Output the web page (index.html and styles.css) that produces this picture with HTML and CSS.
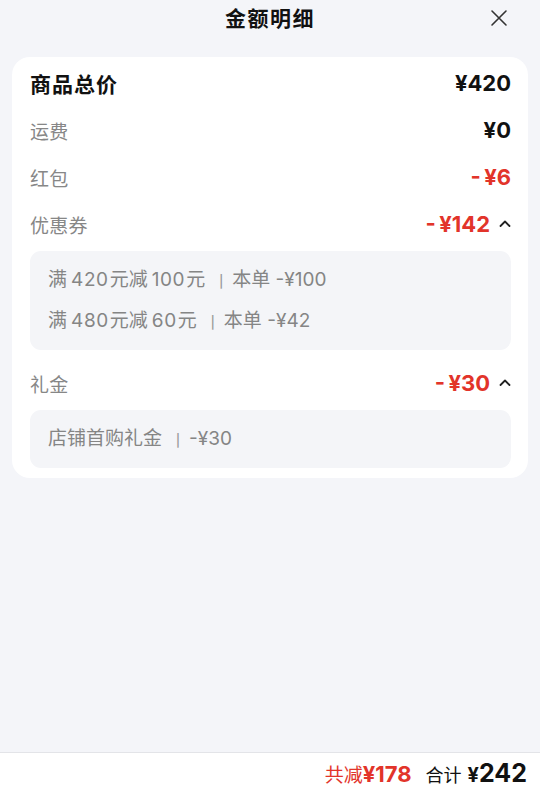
FILE: index.html
```html
<!DOCTYPE html>
<html lang="zh-CN">
<head>
<meta charset="utf-8">
<link rel="stylesheet" href="styles.css">
</head>
<body>
<div class="page">
  <header class="header">
    <h1 class="title">金额明细</h1>
    <button class="close" aria-label="关闭">
      <svg width="18" height="18" viewBox="0 0 18 18"><path d="M2 2L16 16M16 2L2 16" stroke="#333" stroke-width="1.6" fill="none" stroke-linecap="round"/></svg>
    </button>
  </header>

  <section class="card">
    <div class="row">
      <span class="label-main">商品总价</span>
      <span class="value">¥420</span>
    </div>
    <div class="row">
      <span class="label">运费</span>
      <span class="value">¥0</span>
    </div>
    <div class="row">
      <span class="label">红包</span>
      <span class="value red">-&thinsp;¥6</span>
    </div>
    <div class="group">
      <div class="row">
        <span class="label">优惠券</span>
        <span class="value red">-&thinsp;¥142<svg class="chev" width="14" height="10" viewBox="0 0 14 10"><path d="M2.5 7L7 2.5L11.5 7" stroke="#222" stroke-width="1.8" fill="none" stroke-linecap="round" stroke-linejoin="round"/></svg></span>
      </div>
      <div class="sub">
        <div class="sub-line">满<span class="num">420</span>元减<span class="num">100</span>元<span class="sep">丨</span>本单 -¥100</div>
        <div class="sub-line">满<span class="num">480</span>元减<span class="num">60</span>元<span class="sep">丨</span>本单 -¥42</div>
      </div>
    </div>
    <div class="group">
      <div class="row">
        <span class="label">礼金</span>
        <span class="value red">-&thinsp;¥30<svg class="chev" width="14" height="10" viewBox="0 0 14 10"><path d="M2.5 7L7 2.5L11.5 7" stroke="#222" stroke-width="1.8" fill="none" stroke-linecap="round" stroke-linejoin="round"/></svg></span>
      </div>
      <div class="sub">
        <div class="sub-line">店铺首购礼金<span class="sep">丨</span>-¥30</div>
      </div>
    </div>
  </section>

  <footer class="footer">
    <span class="saved">共减<b>¥178</b></span>
    <span class="total">合计 <b class="yen">¥</b><b class="amount">242</b></span>
  </footer>
</div>
</body>
</html>
```

FILE: styles.css
```css
* { box-sizing: border-box; }
html, body {
  margin: 0;
  padding: 0;
  background: #f4f5f9;
  font-family: "Inter", "Noto Sans CJK SC", sans-serif;
  color: #111;
}
.page {
  width: 540px;
  height: 793px;
  display: flex;
  flex-direction: column;
}
.header {
  height: 57px;
  display: flex;
  justify-content: center;
  position: relative;
}
.title {
  margin: 0;
  margin-top: 3px;
  font-size: 21px;
  line-height: 32px;
  font-weight: 700;
  letter-spacing: 1.5px;
  color: #111;
}
.close {
  position: absolute;
  right: 32px;
  top: 9px;
  border: 0;
  background: none;
  padding: 0;
  width: 18px;
  height: 18px;
  display: flex;
}
.card {
  margin: 0 12px;
  background: #fff;
  border-radius: 18px;
  padding: 12px 17px 10px 18px;
  display: flex;
  flex-direction: column;
  gap: 19px;
}
.row {
  display: flex;
  justify-content: space-between;
  align-items: center;
  height: 28px;
}
.label-main {
  font-size: 21px;
  font-weight: 700;
  letter-spacing: 1px;
  color: #111;
}
.label {
  font-size: 19px;
  color: #878787;
  letter-spacing: 0.3px;
}
.value {
  font-size: 22px;
  font-weight: 700;
  color: #111;
  display: flex;
  align-items: center;
}
.value.red { color: #e2342a; }
.chev { margin-left: 8px; margin-right: -1px; }
.group {
  display: flex;
  flex-direction: column;
  gap: 13px;
}
.sub {
  background: #f4f5f8;
  border-radius: 11px;
  padding: 15px 18px 15px;
  display: flex;
  flex-direction: column;
  gap: 13px;
}
.sub-line {
  font-size: 19px;
  height: 28px;
  line-height: 28px;
  color: #858585;
  display: flex;
  align-items: center;
  white-space: pre;
}
.num {
  letter-spacing: 0.6px;
  margin: 0 1px 0 4px;
}
.sep {
  font-size: 16px;
  color: #9a9a9a;
  margin: 2px 3px 0 8px;
}
.footer {
  margin-top: auto;
  height: 41px;
  background: #fff;
  border-top: 1px solid #e3e4e8;
  display: flex;
  justify-content: flex-end;
  align-items: center;
  gap: 14px;
  padding-right: 13px;
}
.saved {
  color: #e2342a;
  font-size: 19px;
}
.saved b { font-size: 22px; font-weight: 700; }
.total { font-size: 18px; color: #111; }
.total .yen { font-size: 20px; font-weight: 700; margin-left: 1px; }
.total .amount { font-size: 25px; font-weight: 700; }
```
